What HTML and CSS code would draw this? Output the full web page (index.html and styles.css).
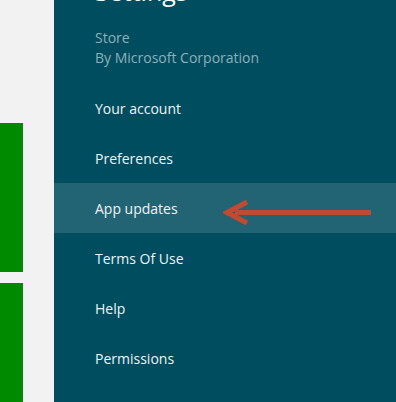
FILE: index.html
```html
<!DOCTYPE html>
<html lang="en">
<head>
    <meta charset="UTF-8">
    <title>Settings</title>
    <link rel="stylesheet" href="styles.css">
</head>
<body>
    <div class="start">
        <div class="tile tile-top"></div>
        <div class="tile tile-bottom"></div>
    </div>

    <div class="charm">
        <div class="charm-head">
            <h1>Settings</h1>
            <p class="app-name">Store</p>
            <p class="app-by">By Microsoft Corporation</p>
        </div>

        <ul class="menu">
            <li>Your account</li>
            <li>Preferences</li>
            <li class="selected">
                App updates
                <svg class="arrow" width="160" height="30" viewBox="0 0 160 30">
                    <path d="M148 12.5 L12 12.5" stroke="#c24a30" stroke-width="5" fill="none"/>
                    <path d="M24 2 L4 12.5 L24 23" stroke="#c24a30" stroke-width="5" fill="none"/>
                </svg>
            </li>
            <li>Terms Of Use</li>
            <li>Help</li>
            <li>Permissions</li>
        </ul>
    </div>
</body>
</html>
```

FILE: styles.css
```css
body {
    margin: 0;
    height: 402px;
    display: flex;
    overflow: hidden;
    font-family: "Open Sans", "Noto Sans", sans-serif;
    background-color: #f2f2f2;
}
.start {
    width: 54px;
    flex-shrink: 0;
    padding-top: 123px;
    display: flex;
    flex-direction: column;
    gap: 11px;
}
.tile {
    width: 23px;
    flex-shrink: 0;
    background-color: #008a00;
}
.tile-top {
    height: 149px;
}
.tile-bottom {
    height: 119px;
}
.charm {
    flex: 1;
    background-color: #004d60;
    color: #ffffff;
}
.charm-head {
    display: flow-root;
    padding-left: 41px;
    height: 83px;
}
.charm-head h1 {
    margin: -27px 0 0 0;
    font-size: 25px;
    font-weight: 400;
    line-height: 36px;
}
.app-name,
.app-by {
    margin: 0;
    font-size: 14px;
    line-height: 20px;
    color: #8fb0b8;
}
.app-name {
    margin-top: 19px;
}
.menu {
    list-style: none;
    margin: 0;
    padding: 0;
}
.menu li {
    position: relative;
    height: 50px;
    display: flex;
    align-items: center;
    padding-left: 41px;
    font-size: 14px;
    color: #eef4f5;
}
.menu li.selected {
    background-color: #226473;
}
.arrow {
    position: absolute;
    left: 169px;
    top: 17px;
}
```
